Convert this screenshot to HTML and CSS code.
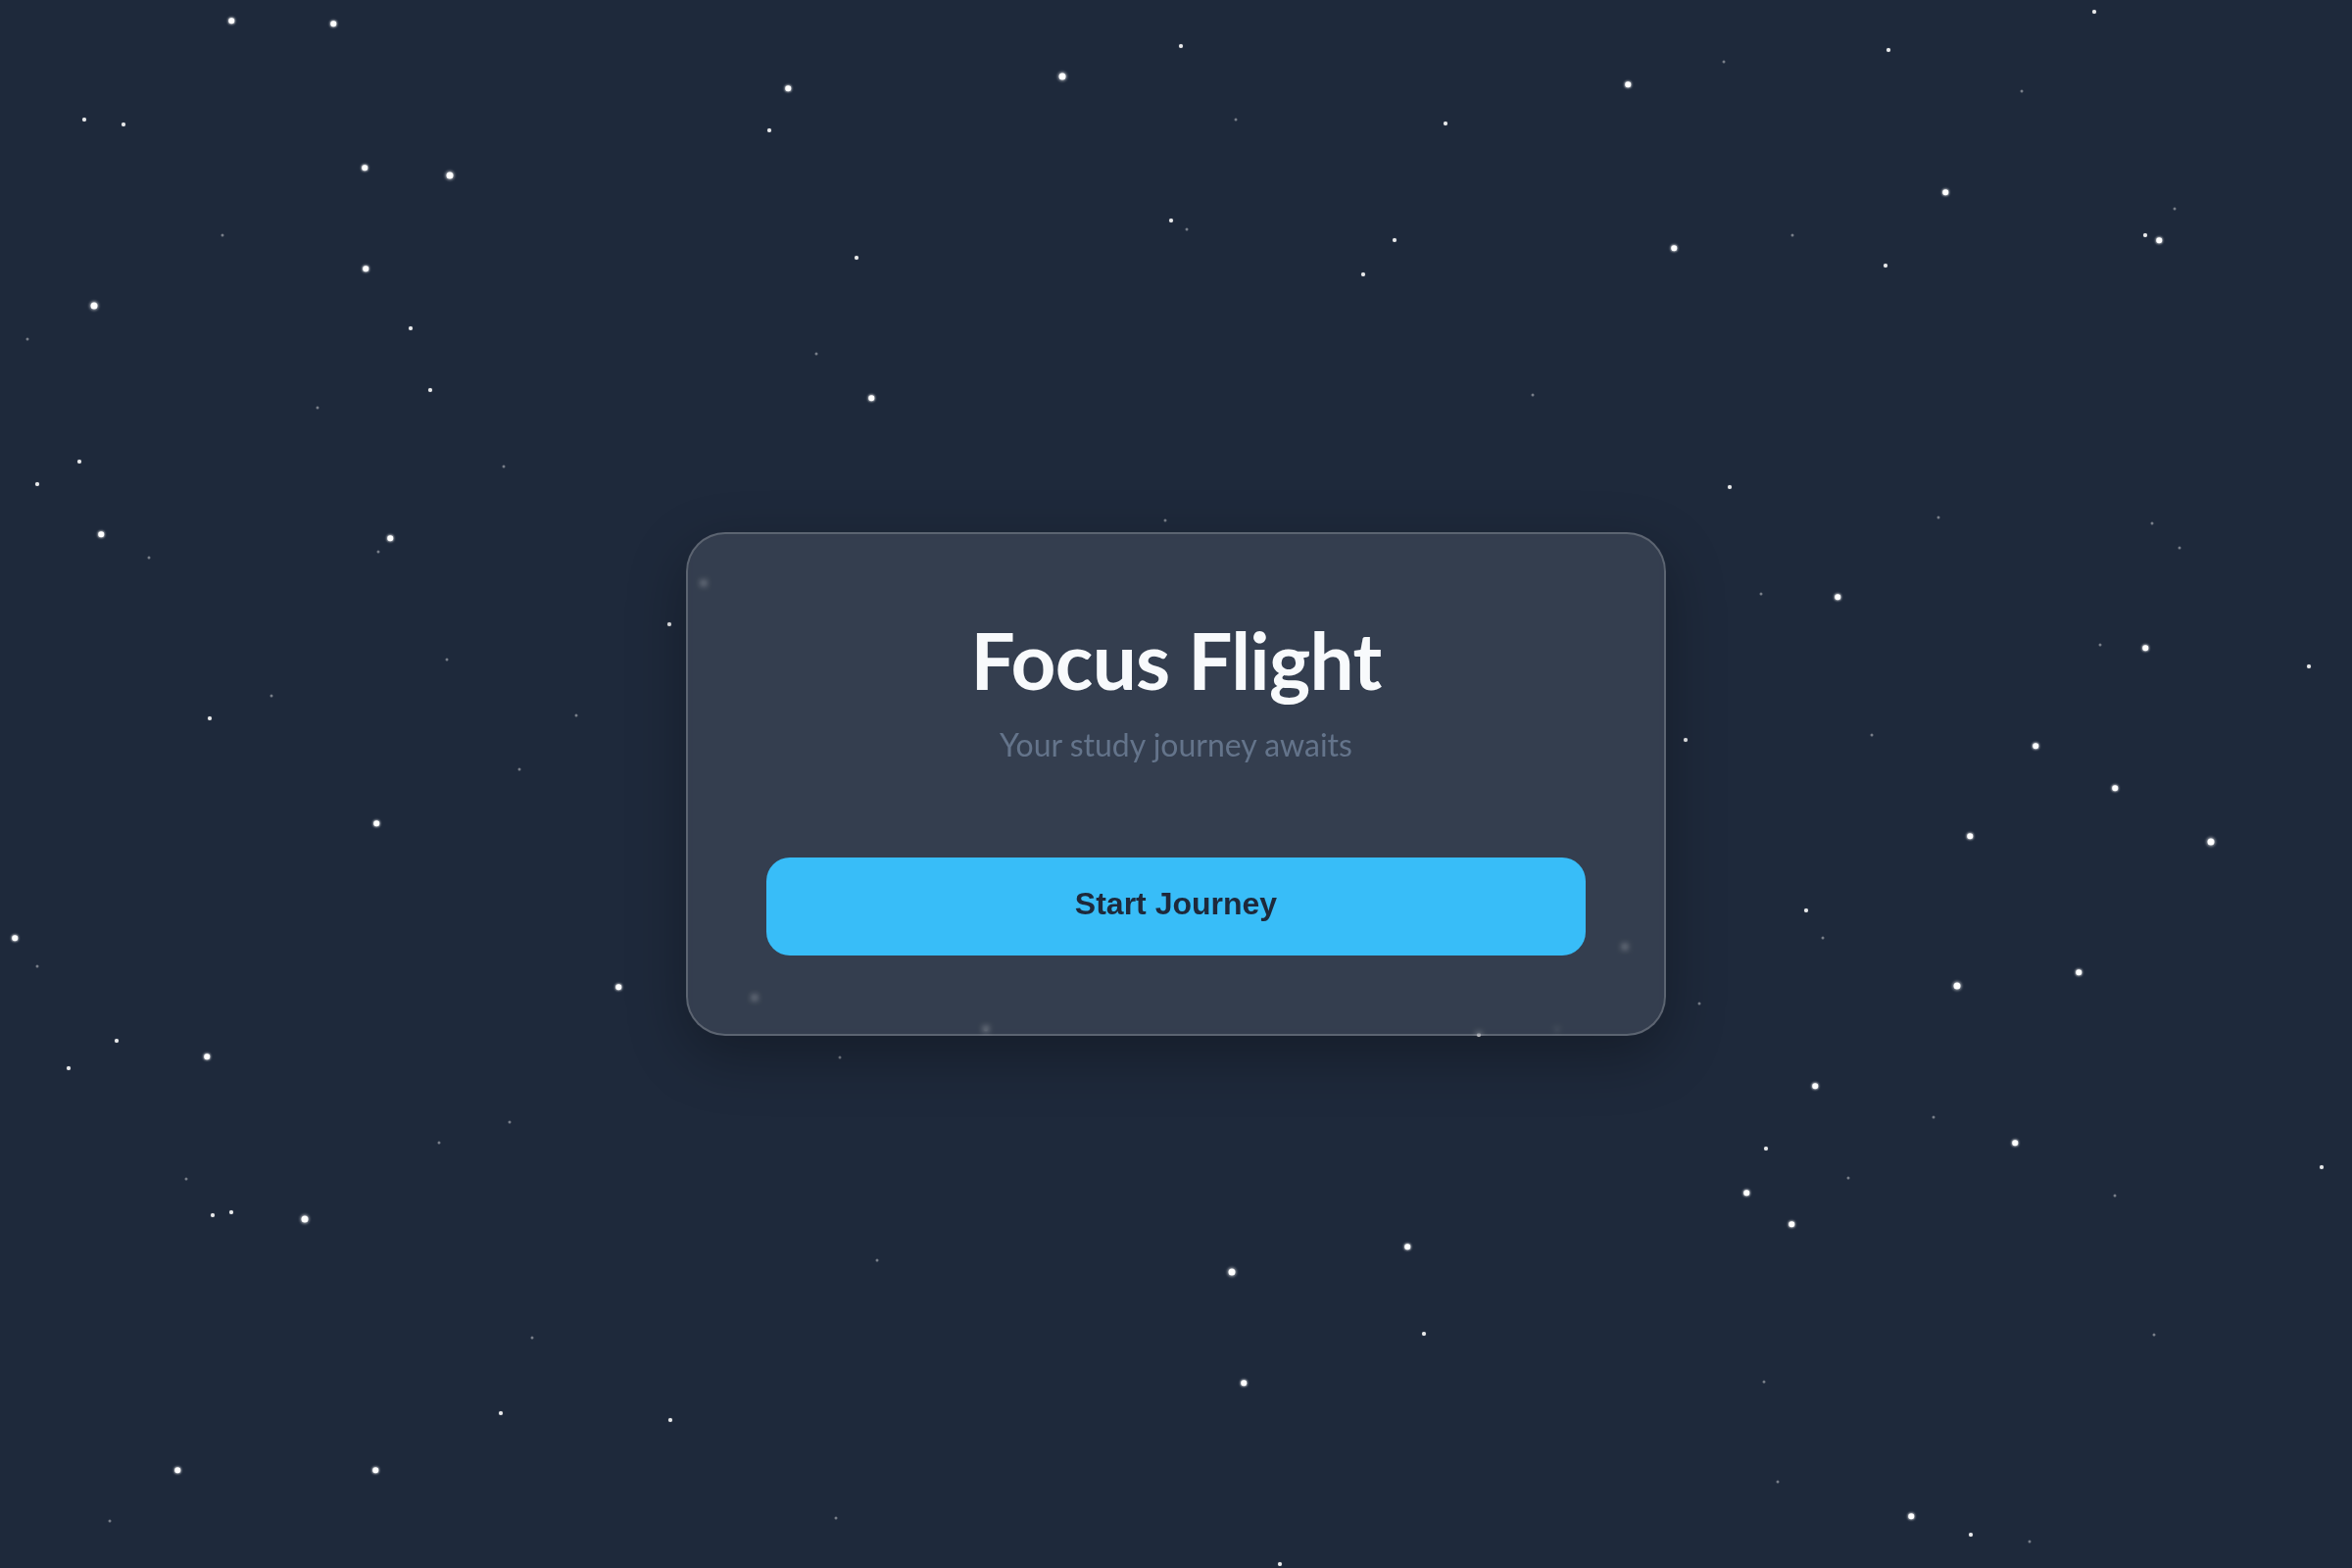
FILE: index.html
```html
<!DOCTYPE html>
<html lang="en">
<head>
<meta charset="utf-8">
<title>Focus Flight</title>
<link rel="stylesheet" href="styles.css">
</head>
<body>
<div class="sky">
  <span class="star m" style="left:236px;top:21px"></span>
  <span class="star m" style="left:340px;top:24px"></span>
  <span class="star s" style="left:86px;top:122px"></span>
  <span class="star s" style="left:126px;top:127px"></span>
  <span class="star m" style="left:372px;top:171px"></span>
  <span class="star l" style="left:459px;top:179px"></span>
  <span class="star t" style="left:227px;top:240px"></span>
  <span class="star m" style="left:373px;top:274px"></span>
  <span class="star l" style="left:96px;top:312px"></span>
  <span class="star s" style="left:419px;top:335px"></span>
  <span class="star t" style="left:28px;top:346px"></span>
  <span class="star t" style="left:324px;top:416px"></span>
  <span class="star s" style="left:439px;top:398px"></span>
  <span class="star s" style="left:81px;top:471px"></span>
  <span class="star t" style="left:514px;top:476px"></span>
  <span class="star s" style="left:38px;top:494px"></span>
  <span class="star m" style="left:103px;top:545px"></span>
  <span class="star m" style="left:398px;top:549px"></span>
  <span class="star t" style="left:386px;top:563px"></span>
  <span class="star t" style="left:152px;top:569px"></span>
  <span class="star s" style="left:214px;top:733px"></span>
  <span class="star t" style="left:277px;top:710px"></span>
  <span class="star t" style="left:588px;top:730px"></span>
  <span class="star t" style="left:530px;top:785px"></span>
  <span class="star m" style="left:384px;top:840px"></span>
  <span class="star m" style="left:15px;top:957px"></span>
  <span class="star t" style="left:38px;top:986px"></span>
  <span class="star m" style="left:631px;top:1007px"></span>
  <span class="star s" style="left:119px;top:1062px"></span>
  <span class="star s" style="left:70px;top:1090px"></span>
  <span class="star m" style="left:211px;top:1078px"></span>
  <span class="star t" style="left:520px;top:1145px"></span>
  <span class="star t" style="left:448px;top:1166px"></span>
  <span class="star t" style="left:190px;top:1203px"></span>
  <span class="star s" style="left:217px;top:1240px"></span>
  <span class="star s" style="left:236px;top:1237px"></span>
  <span class="star l" style="left:311px;top:1244px"></span>
  <span class="star t" style="left:543px;top:1365px"></span>
  <span class="star s" style="left:511px;top:1442px"></span>
  <span class="star s" style="left:684px;top:1449px"></span>
  <span class="star m" style="left:181px;top:1500px"></span>
  <span class="star m" style="left:383px;top:1500px"></span>
  <span class="star t" style="left:112px;top:1552px"></span>
  <span class="star t" style="left:853px;top:1549px"></span>
  <span class="star m" style="left:804px;top:90px"></span>
  <span class="star s" style="left:785px;top:133px"></span>
  <span class="star l" style="left:1084px;top:78px"></span>
  <span class="star s" style="left:1205px;top:47px"></span>
  <span class="star t" style="left:1261px;top:122px"></span>
  <span class="star s" style="left:874px;top:263px"></span>
  <span class="star s" style="left:1195px;top:225px"></span>
  <span class="star t" style="left:1211px;top:234px"></span>
  <span class="star m" style="left:889px;top:406px"></span>
  <span class="star t" style="left:833px;top:361px"></span>
  <span class="star t" style="left:1189px;top:531px"></span>
  <span class="star s" style="left:1475px;top:126px"></span>
  <span class="star m" style="left:1661px;top:86px"></span>
  <span class="star t" style="left:1759px;top:63px"></span>
  <span class="star s" style="left:1927px;top:51px"></span>
  <span class="star s" style="left:2137px;top:12px"></span>
  <span class="star t" style="left:2063px;top:93px"></span>
  <span class="star m" style="left:1708px;top:253px"></span>
  <span class="star s" style="left:1423px;top:245px"></span>
  <span class="star s" style="left:1391px;top:280px"></span>
  <span class="star t" style="left:1829px;top:240px"></span>
  <span class="star m" style="left:1985px;top:196px"></span>
  <span class="star s" style="left:1924px;top:271px"></span>
  <span class="star t" style="left:2219px;top:213px"></span>
  <span class="star s" style="left:2189px;top:240px"></span>
  <span class="star m" style="left:2203px;top:245px"></span>
  <span class="star t" style="left:1564px;top:403px"></span>
  <span class="star s" style="left:1765px;top:497px"></span>
  <span class="star t" style="left:1978px;top:528px"></span>
  <span class="star t" style="left:2196px;top:534px"></span>
  <span class="star t" style="left:2224px;top:559px"></span>
  <span class="star t" style="left:1797px;top:606px"></span>
  <span class="star m" style="left:1875px;top:609px"></span>
  <span class="star t" style="left:2143px;top:658px"></span>
  <span class="star m" style="left:2189px;top:661px"></span>
  <span class="star s" style="left:2356px;top:680px"></span>
  <span class="star s" style="left:1720px;top:755px"></span>
  <span class="star t" style="left:1910px;top:750px"></span>
  <span class="star m" style="left:2077px;top:761px"></span>
  <span class="star m" style="left:2158px;top:804px"></span>
  <span class="star m" style="left:2010px;top:853px"></span>
  <span class="star l" style="left:2256px;top:859px"></span>
  <span class="star s" style="left:1843px;top:929px"></span>
  <span class="star t" style="left:1860px;top:957px"></span>
  <span class="star l" style="left:1997px;top:1006px"></span>
  <span class="star m" style="left:2121px;top:992px"></span>
  <span class="star t" style="left:1734px;top:1024px"></span>
  <span class="star m" style="left:1852px;top:1108px"></span>
  <span class="star t" style="left:1973px;top:1140px"></span>
  <span class="star s" style="left:1802px;top:1172px"></span>
  <span class="star m" style="left:2056px;top:1166px"></span>
  <span class="star m" style="left:1782px;top:1217px"></span>
  <span class="star t" style="left:1886px;top:1202px"></span>
  <span class="star t" style="left:2158px;top:1220px"></span>
  <span class="star m" style="left:1828px;top:1249px"></span>
  <span class="star s" style="left:2369px;top:1191px"></span>
  <span class="star m" style="left:1436px;top:1272px"></span>
  <span class="star l" style="left:1257px;top:1298px"></span>
  <span class="star t" style="left:895px;top:1286px"></span>
  <span class="star s" style="left:1453px;top:1361px"></span>
  <span class="star m" style="left:1269px;top:1411px"></span>
  <span class="star t" style="left:1800px;top:1410px"></span>
  <span class="star t" style="left:2198px;top:1362px"></span>
  <span class="star t" style="left:1814px;top:1512px"></span>
  <span class="star m" style="left:1950px;top:1547px"></span>
  <span class="star s" style="left:2011px;top:1566px"></span>
  <span class="star t" style="left:2071px;top:1573px"></span>
  <span class="star s" style="left:1306px;top:1596px"></span>
  <span class="star t" style="left:857px;top:1079px"></span>
  <span class="star s" style="left:683px;top:637px"></span>
  <span class="star t" style="left:456px;top:673px"></span>
  <span class="star s" style="left:718px;top:595px"></span>
  <span class="star s" style="left:770px;top:1018px"></span>
  <span class="star s" style="left:1006px;top:1050px"></span>
  <span class="star s" style="left:1509px;top:1056px"></span>
  <span class="star s" style="left:1658px;top:966px"></span>
  <span class="star t" style="left:1589px;top:1050px"></span>
</div>

<main class="stage">
  <section class="card">
    <h1 class="title">Focus Flight</h1>
    <p class="subtitle">Your study journey awaits</p>
    <button class="start-btn" type="button">Start Journey</button>
  </section>
</main>
</body>
</html>
```

FILE: styles.css
```css
* {
  box-sizing: border-box;
}

html,
body {
  margin: 0;
  padding: 0;
  height: 100%;
}

body {
  background: #1e293b;
  font-family: "Lato", "Liberation Sans", sans-serif;
  overflow: hidden;
  position: relative;
}

.sky {
  position: absolute;
  inset: 0;
  pointer-events: none;
}

.star {
  position: absolute;
  border-radius: 50%;
  background: #ffffff;
  transform: translate(-50%, -50%);
}

.star.l {
  width: 7px;
  height: 7px;
  box-shadow: 0 0 3px 1px rgba(255, 255, 255, 0.6);
}

.star.m {
  width: 5.5px;
  height: 5.5px;
  box-shadow: 0 0 2px 1px rgba(255, 255, 255, 0.5);
}

.star.s {
  width: 4px;
  height: 4px;
  opacity: 0.9;
  box-shadow: 0 0 1px rgba(255, 255, 255, 0.6);
}

.star.t {
  width: 3px;
  height: 3px;
  opacity: 0.4;
}

.stage {
  position: relative;
  z-index: 1;
  height: 100%;
  display: flex;
  align-items: center;
  justify-content: center;
}

.card {
  width: 1000px;
  padding: 80px;
  border: 2px solid rgba(255, 255, 255, 0.2);
  border-radius: 40px;
  background: rgba(255, 255, 255, 0.1);
  backdrop-filter: blur(3px);
  box-shadow: 0 20px 60px rgba(0, 0, 0, 0.3);
  display: flex;
  flex-direction: column;
  align-items: center;
  text-align: center;
}

.title {
  margin: 0;
  font-family: "Lato", sans-serif;
  font-size: 80px;
  font-weight: 700;
  line-height: 1.2;
  letter-spacing: -0.7px;
  color: #f8fafc;
}

.subtitle {
  margin: 20px 0 0;
  font-family: "Lato", sans-serif;
  font-size: 32px;
  font-weight: 400;
  line-height: 1.2;
  color: #64748b;
}

.start-btn {
  margin-top: 96px;
  width: 100%;
  height: 100px;
  padding: 0 0 5px;
  border: none;
  border-radius: 24px;
  background: #38bdf8;
  color: #1e293b;
  font-family: "Liberation Sans", Arial, sans-serif;
  font-size: 32px;
  font-weight: 700;
  cursor: pointer;
}
```
